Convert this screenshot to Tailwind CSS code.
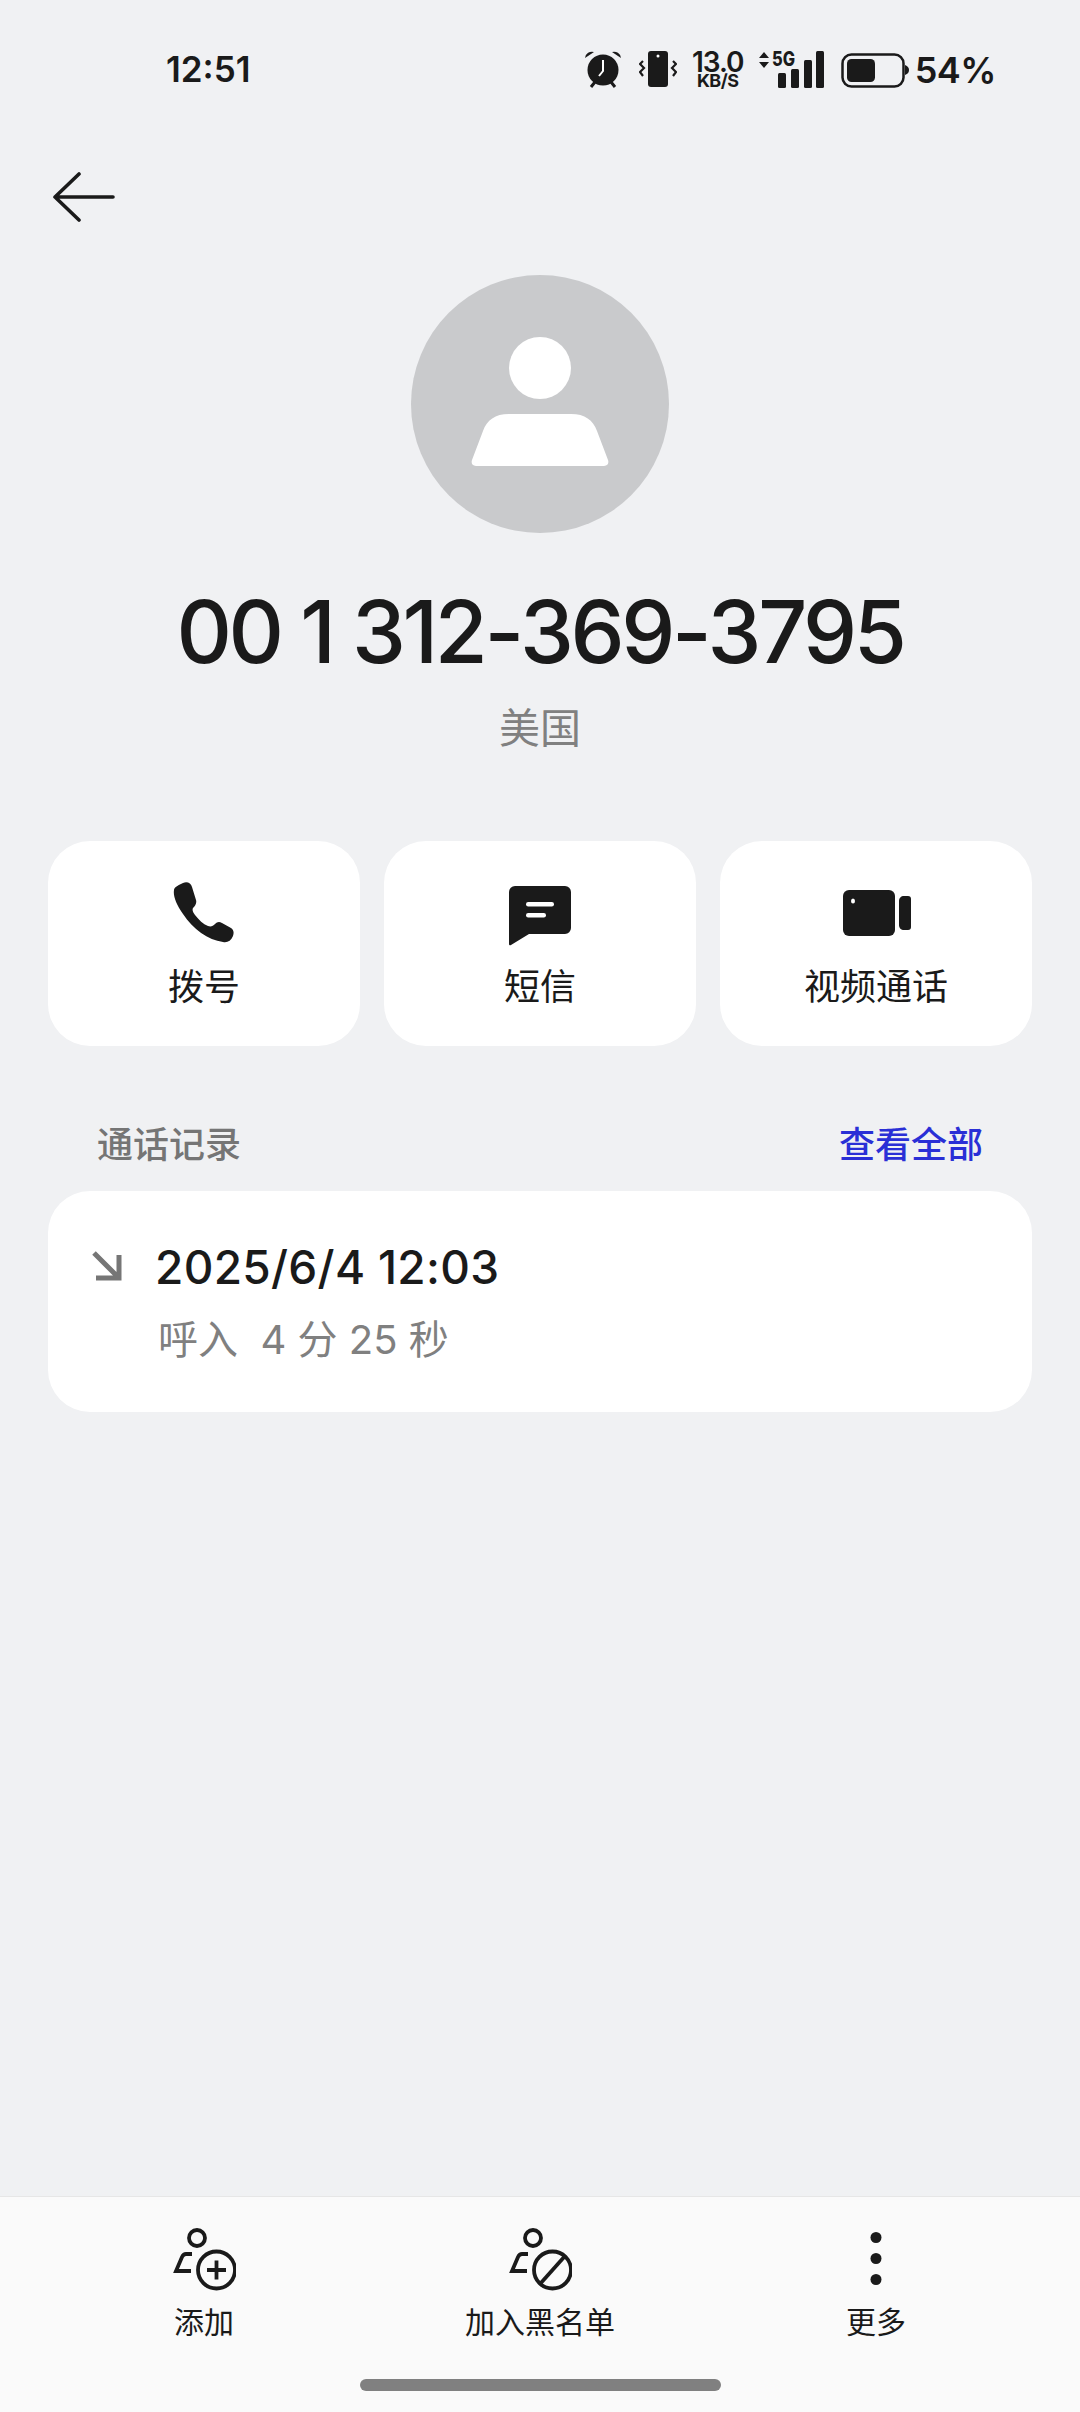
<!DOCTYPE html>
<html lang="zh-CN">
<head>
  <meta charset="UTF-8" />
  <meta name="viewport" content="width=device-width, initial-scale=1.0"/>
  <title>通话详情</title>
  <script src="https://cdn.jsdelivr.net/npm/@tailwindcss/browser@4"></script>
</head>
<body class="bg-[#f0f1f3] font-['Inter','Noto_Sans_CJK_SC',sans-serif] text-[#1a1a1a]">
<div class="w-[1080px] h-[2412px] flex flex-col overflow-hidden">

  <!-- status bar -->
  <div class="h-[138px] shrink-0 flex items-start pl-[166px] pr-[84px] pt-[50px]">
    <span class="text-[35px] leading-[38px] font-semibold mr-auto">12:51</span>
    <svg width="38" height="38" viewBox="0 0 38 38"><circle cx="19" cy="20" r="15.5" fill="#1a1a1a"/><path d="M1 8a7 7 0 0 1 9-6z M37 8a7 7 0 0 0-9-6z" fill="#1a1a1a"/><path d="M19 10v11l-4 5" stroke="#fff" stroke-width="2" fill="none"/><path d="M7 37l4-5M31 37l-4-5" stroke="#1a1a1a" stroke-width="3"/></svg>
    <svg width="38" height="38" viewBox="0 0 38 38" class="ml-[17px]"><rect x="9" y="1" width="20" height="36" rx="3" fill="#1a1a1a"/><circle cx="19" cy="6" r="1.5" fill="#fff"/><path d="M4 11l-3 3 4 4-4 4 3 4M34 11l3 3-4 4 4 4-3 4" fill="none" stroke="#1a1a1a" stroke-width="2.2"/></svg>
    <div class="ml-[14px] w-[54px] flex flex-col items-center font-semibold">
      <span class="text-[28px] leading-[24px] tracking-[-1px]">13.0</span>
      <span class="text-[18px] leading-[14px] font-bold tracking-[-0.5px]">KB/S</span>
    </div>
    <svg width="68" height="38" viewBox="0 0 68 38" class="ml-[12px] overflow-visible"><path d="M2 8l5-6 5 6zM2 12l5 6 5-6z" fill="#1a1a1a"/><text x="15" y="16" font-size="20" font-weight="800" font-family="Inter" fill="#1a1a1a" textLength="23" lengthAdjust="spacingAndGlyphs">5G</text><rect x="21" y="23" width="8" height="15" rx="1.5" fill="#1a1a1a"/><rect x="34" y="19" width="8" height="19" rx="1.5" fill="#1a1a1a"/><rect x="47" y="10" width="8" height="28" rx="1.5" fill="#1a1a1a"/><rect x="59" y="1" width="8" height="37" rx="1.5" fill="#1a1a1a"/></svg>
    <svg width="68" height="38" viewBox="0 0 68 38" class="ml-[16px]"><rect x="1.5" y="4.5" width="61" height="32" rx="9" fill="none" stroke="#1a1a1a" stroke-width="2.5"/><rect x="6" y="9" width="28" height="23" rx="4.5" fill="#1a1a1a"/><path d="M64 15c3 1 4 3 4 5s-1 4-4 5z" fill="#1a1a1a"/></svg>
    <span class="ml-[6px] text-[36px] leading-[40px] font-semibold tracking-[-0.5px]">54%</span>
  </div>

  <!-- back -->
  <div class="h-[137px] shrink-0 pl-[53px] pt-[32px]">
    <svg width="64" height="52" viewBox="0 0 64 52" fill="none" stroke="#1a1a1a" stroke-width="3.6" stroke-linecap="round" stroke-linejoin="round"><path d="M60 27H2M26 4L2 27l24 23"/></svg>
  </div>

  <!-- contact -->
  <div class="flex flex-col items-center shrink-0">
    <div class="w-[258px] h-[258px] rounded-full bg-[#c9cacc] flex flex-col items-center pt-[62px]">
      <div class="w-[62px] h-[62px] rounded-full bg-white"></div>
      <svg width="138" height="52" viewBox="0 0 138 52" class="mt-[15px]"><path d="M1 46L12 17C16 6 24 0 38 0H100C114 0 122 6 126 17L137 46C138 49 137 52 133 52H5C1 52 0 49 1 46Z" fill="#fff"/></svg>
    </div>
    <h1 class="mt-[50px] text-[86px] leading-[98px] font-medium tracking-[-3.4px]">00 1 312-369-3795</h1>
    <p class="mt-[23px] text-[41px] leading-[48px] text-[#808080]">美国</p>
  </div>

  <!-- actions -->
  <div class="mt-[89px] mx-[48px] grid grid-cols-3 gap-[24px] shrink-0">
    <div class="h-[205px] bg-white rounded-[42px] flex flex-col items-center">
      <svg width="62" height="62" viewBox="0 0 62 62" class="mt-[41px]"><path d="M10 1C14-1 18 1 19 5L23 18C24 21 22 24 20 26C19 28 20 30 22 33C26 38 30 42 35 44C38 45 40 44 42 42C44 40 46 39 49 41L58 46C61 48 61 51 60 54C58 59 54 61 50 60C35 58 20 47 10 32C3 22 0 14 1 8C1 5 6 3 10 1Z" fill="#1a1a1a"/></svg>
      <span class="mt-[20px] text-[36px] leading-[46px]">拨号</span>
    </div>
    <div class="h-[205px] bg-white rounded-[42px] flex flex-col items-center">
      <svg width="62" height="60" viewBox="0 0 62 60" class="mt-[45px]"><path d="M6 0h50a6 6 0 0 1 6 6v36a6 6 0 0 1-6 6H20L2 59c-1 .6-2 0-2-1V6a6 6 0 0 1 6-6z" fill="#1a1a1a"/><rect x="17" y="16" width="28" height="4.5" rx="2.2" fill="#fff"/><rect x="17" y="27" width="20" height="4.5" rx="2.2" fill="#fff"/></svg>
      <span class="mt-[18px] text-[36px] leading-[46px]">短信</span>
    </div>
    <div class="h-[205px] bg-white rounded-[42px] flex flex-col items-center">
      <svg width="68" height="46" viewBox="0 0 68 46" class="mt-[49px] ml-[2px]"><rect width="52" height="46" rx="6" fill="#1a1a1a"/><ellipse cx="10" cy="11" rx="2" ry="2.5" fill="#fff"/><path d="M56 11c0-3 2-5 5-5h4c2 0 3 1 3 3v28c0 2-1 3-3 3h-4c-3 0-5-2-5-5z" fill="#1a1a1a"/></svg>
      <span class="mt-[28px] text-[36px] leading-[46px]">视频通话</span>
    </div>
  </div>

  <!-- call log -->
  <div class="mt-[76px] mx-[97px] flex justify-between items-center text-[36px] leading-[46px] font-medium shrink-0">
    <span class="text-[#757575]">通话记录</span>
    <span class="text-[#2a2fd6]">查看全部</span>
  </div>
  <div class="mt-[23px] mx-[48px] h-[221px] bg-white rounded-[42px] flex shrink-0">
    <svg width="30" height="30" viewBox="0 0 30 30" class="ml-[44px] mt-[60px]" fill="none" stroke="#767676" stroke-width="5"><path d="M2 2l25 25M27 4v23H4"/></svg>
    <div class="ml-[33px] pt-[46px]">
      <p class="text-[46px] leading-[60px] font-medium tracking-[0.3px]">2025/6/4 12:03</p>
      <p class="mt-[18px] ml-[3px] text-[40px] leading-[50px] text-[#808080] whitespace-pre">呼入  4 分 25 秒</p>
    </div>
  </div>

  <!-- bottom bar -->
  <div class="mt-auto h-[216px] shrink-0 bg-[#fafafa] border-t border-[#e6e6e6] flex flex-col">
    <div class="grid grid-cols-3 px-[36px] h-[176px]">
      <div class="flex flex-col items-center pt-[31px]">
        <svg width="64" height="64" viewBox="0 0 64 64" fill="none" stroke="#1a1a1a" stroke-width="3.8"><circle cx="25" cy="10" r="8"/><path d="M20 26h-6c-2 0-3 1-4 3l-6 14h15"/><circle cx="44.5" cy="42" r="18.5"/><path d="M44.5 32.5v19M35 42h19"/></svg>
        <span class="mt-[10px] text-[30px] leading-[40px]">添加</span>
      </div>
      <div class="flex flex-col items-center pt-[31px]">
        <svg width="64" height="64" viewBox="0 0 64 64" fill="none" stroke="#1a1a1a" stroke-width="3.8"><circle cx="25" cy="10" r="8"/><path d="M20 26h-6c-2 0-3 1-4 3l-6 14h15"/><circle cx="44.5" cy="42" r="18.5"/><path d="M32 56l25-28"/></svg>
        <span class="mt-[10px] text-[30px] leading-[40px]">加入黑名单</span>
      </div>
      <div class="flex flex-col items-center pt-[31px]">
        <svg width="64" height="64" viewBox="0 0 64 64" fill="#1a1a1a"><circle cx="32" cy="9.5" r="5.5"/><circle cx="32" cy="30.5" r="5.5"/><circle cx="32" cy="51.5" r="5.5"/></svg>
        <span class="mt-[10px] text-[30px] leading-[40px]">更多</span>
      </div>
    </div>
    <div class="w-[361px] h-[12px] mx-auto rounded-full bg-[#808080] mt-[6px]"></div>
  </div>
</div>
</body>
</html>
